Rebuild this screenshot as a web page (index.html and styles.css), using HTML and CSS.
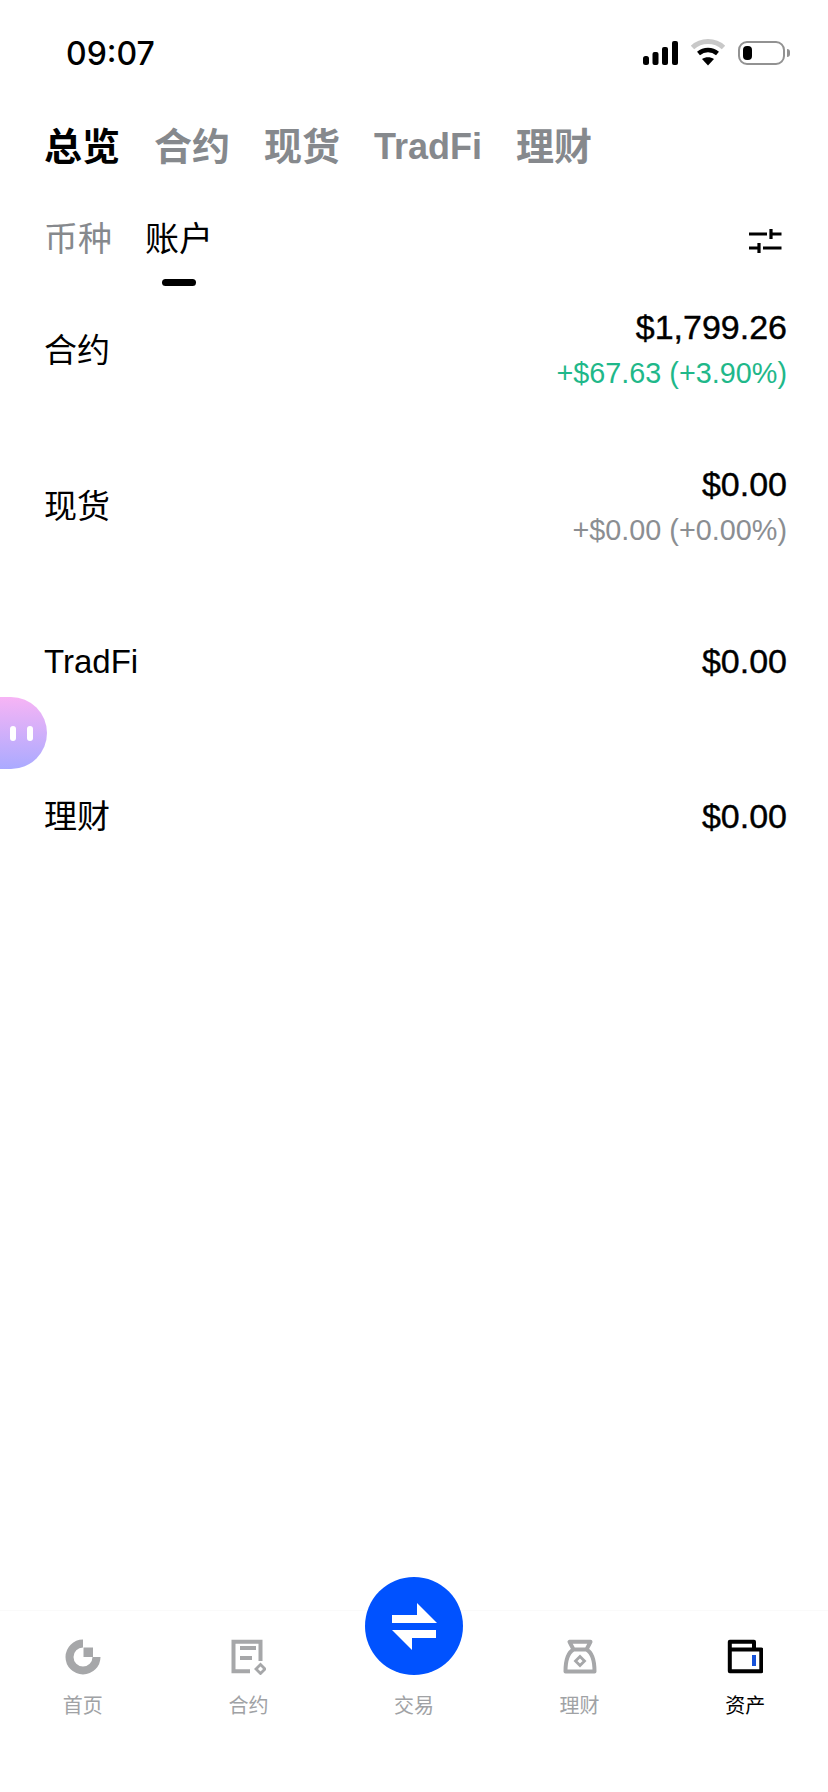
FILE: index.html
```html
<!DOCTYPE html>
<html>

<head>
  <link rel="stylesheet" href="styles.css">
</head>

<body>
  <div class="page">
    <!-- status bar -->
    <div class="status-bar">
      <div class="time">09:07</div>
      <div class="status-icons">
        <svg class="signal" width="35" height="24" viewBox="0 0 35 24">
          <rect x="0" y="15" width="6" height="9" rx="2.500" fill="#000" />
          <rect x="9.500" y="11" width="6" height="13" rx="2" fill="#000" />
          <rect x="19" y="6" width="6" height="18" rx="2" fill="#000" />
          <rect x="29" y="0" width="6" height="24" rx="2" fill="#000" />
        </svg>
        <svg class="wifi" width="36" height="27" viewBox="0 0 36 27">
          <path d="M2.500 8.500C11 0.500 25 0.500 33.500 8.500" fill="none" stroke="#c8c8c8" stroke-width="5" />
          <path d="M8.500 14.500C14 9.800 22 9.800 27.500 14.500" fill="none" stroke="#000" stroke-width="4.500" />
          <path d="M12 20C15.500 17.500 20.500 17.500 24 20L18 26.500Z" fill="#000" />
        </svg>
        <div class="battery">
          <div class="battery-body"><div class="battery-level"></div></div>
          <div class="battery-nub"></div>
        </div>
      </div>
    </div>

    <!-- top tabs -->
    <div class="main-tabs">
      <div class="main-tab active">总览</div>
      <div class="main-tab">合约</div>
      <div class="main-tab">现货</div>
      <div class="main-tab latin">TradFi</div>
      <div class="main-tab">理财</div>
    </div>

    <div class="sub-tabs">
      <div class="sub-tab">币种</div>
      <div class="sub-tab active">账户</div>
      <svg class="filter-icon" width="33" height="26" viewBox="0 0 33 26">
        <path d="M0 6H18M22 1V11M22 6H32.500M0 20H10M10 15V25M14 20H32.500" fill="none" stroke="#000" stroke-width="3.200" />
      </svg>
    </div>

    <!-- account rows -->
    <div class="account-list">
      <div class="account-row">
        <div class="account-name">合约</div>
        <div class="account-values">
          <div class="amount">$1,799.26</div>
          <div class="change up">+$67.63 (+3.90%)</div>
        </div>
      </div>
      <div class="account-row">
        <div class="account-name">现货</div>
        <div class="account-values">
          <div class="amount">$0.00</div>
          <div class="change">+$0.00 (+0.00%)</div>
        </div>
      </div>
      <div class="account-row">
        <div class="account-name">TradFi</div>
        <div class="account-values">
          <div class="amount">$0.00</div>
        </div>
      </div>
      <div class="account-row">
        <div class="account-name">理财</div>
        <div class="account-values">
          <div class="amount">$0.00</div>
        </div>
      </div>
    </div>

    <!-- floating assistant -->
    <div class="bubble">
      <span class="eye"></span>
      <span class="eye"></span>
    </div>

    <!-- bottom nav -->
    <div class="tab-bar">
      <div class="tab-item">
        <svg class="tab-icon" width="36" height="36" viewBox="0 0 36 36">
          <path d="M18 4.500A13.500 13.500 0 1 0 31.500 18" fill="none" stroke="#a6a7a9" stroke-width="8" />
          <rect x="18.500" y="8.500" width="9.500" height="9.500" fill="#a6a7a9" />
        </svg>
        <div class="tab-label">首页</div>
      </div>
      <div class="tab-item">
        <svg class="tab-icon" width="36" height="36" viewBox="0 0 36 36">
          <path d="M30.500 22V2.800H3.500V32.300H20M10 9H26M10 19H22" fill="none" stroke="#a6a7a9" stroke-width="4" />
          <path d="M30.500 25.500L35 30L30.500 34.500L26 30Z" fill="none" stroke="#a6a7a9" stroke-width="2.800" />
        </svg>
        <div class="tab-label">合约</div>
      </div>
      <div class="tab-item">
        <div class="trade-button">
          <svg width="98" height="98" viewBox="0 0 98 98">
            <path d="M27 38H52V26L72 46H27Z" fill="#fff" />
            <path d="M71 53H27L47 73V61H71Z" fill="#fff" />
          </svg>
        </div>
        <div class="tab-icon-space"></div>
        <div class="tab-label">交易</div>
      </div>
      <div class="tab-item">
        <svg class="tab-icon" width="36" height="36" viewBox="0 0 36 36">
          <path d="M7.500 2.800H28.500L24.500 10.500H11.500ZM11.500 10.500C6 13.500 3.500 20 3.500 32.500H32.500C32.500 20 30 13.500 24.500 10.500" fill="none" stroke="#a6a7a9" stroke-width="4" stroke-linejoin="round" />
          <path d="M18 17.500L22.500 22L18 26.500L13.500 22Z" fill="none" stroke="#a6a7a9" stroke-width="2.800" />
        </svg>
        <div class="tab-label">理财</div>
      </div>
      <div class="tab-item">
        <svg class="tab-icon" width="36" height="36" viewBox="0 0 36 36">
          <path d="M2.800 10.500V2.800H27V10.500M2.800 10.500H34.300V32.300H2.800Z" fill="none" stroke="#000" stroke-width="4" stroke-linejoin="round" />
          <rect x="25" y="16" width="4" height="11" fill="#1652d8" />
        </svg>
        <div class="tab-label active">资产</div>
      </div>
    </div>
  </div>
</body>

</html>
```

FILE: styles.css
```css
* {
  box-sizing: border-box;
}

body {
  margin: 0;
  background-color: #fff;
  font-family: "Liberation Sans", "Noto Sans CJK SC", sans-serif;
  color: #000;
}

.page {
  position: relative;
  display: flex;
  flex-direction: column;
  height: 1792px;
  overflow: hidden;
}

/* status bar */
.status-bar {
  display: flex;
  justify-content: space-between;
  align-items: center;
  height: 53px;
  margin-top: 26px;
  padding: 0 38px 0 66px;
}

.time {
  padding-top: 2px;
  font-family: "Inter", "Liberation Sans", sans-serif;
  font-size: 32px;
  font-weight: 500;
}

.status-icons {
  display: flex;
  align-items: center;
  gap: 12px;
}

.wifi {
  margin-top: -1px;
}

.battery {
  display: flex;
  align-items: center;
  gap: 2px;
}

.battery-body {
  width: 47px;
  height: 24px;
  padding: 3px;
  border: 2px solid #929292;
  border-radius: 9px;
}

.battery-level {
  width: 9px;
  height: 100%;
  background-color: #000;
  border-radius: 4px;
}

.battery-nub {
  width: 3px;
  height: 8px;
  background-color: #929292;
  border-radius: 0 3px 3px 0;
}

/* tabs */
.main-tabs {
  display: flex;
  align-items: center;
  gap: 34px;
  height: 48px;
  margin-top: 44px;
  padding-left: 44px;
}

.main-tab {
  font-size: 38px;
  font-weight: 700;
  line-height: 48px;
  color: #86898d;
}

.main-tab.latin {
  font-size: 36px;
}

.main-tab.active {
  color: #000;
}

.sub-tabs {
  position: relative;
  display: flex;
  align-items: center;
  gap: 33px;
  height: 44px;
  margin-top: 48px;
  padding-left: 44px;
}

.sub-tab {
  position: relative;
  margin-bottom: 5px;
  font-size: 34px;
  line-height: 44px;
  color: #86898d;
}

.sub-tab.active {
  color: #000;
}

.sub-tab.active::after {
  content: "";
  position: absolute;
  left: 17px;
  top: 62px;
  width: 34px;
  height: 7px;
  background-color: #000;
  border-radius: 4px;
}

.filter-icon {
  margin-left: auto;
  margin-right: 46px;
}

/* account rows */
.account-list {
  display: flex;
  flex-direction: column;
  margin-top: 7px;
  padding: 0 41px 0 44px;
}

.account-row {
  display: flex;
  justify-content: space-between;
  align-items: center;
  height: 155px;
}

.account-row:first-child {
  height: 158px;
}

.account-name {
  padding-top: 3px;
  font-size: 33px;
  line-height: 40px;
}

.account-values {
  text-align: right;
}

.amount {
  font-size: 34px;
  line-height: 40px;
  -webkit-text-stroke: 0.4px #000;
}

.change {
  margin-top: 8px;
  font-size: 28.8px;
  line-height: 36px;
  color: #8b8e92;
}

.change.up {
  color: #1fb88a;
}

/* floating bubble sits over the list */
.bubble {
  position: absolute;
  left: 0;
  top: 697px;
  display: flex;
  align-items: center;
  gap: 11px;
  width: 47px;
  height: 72px;
  padding-left: 10px;
  background: linear-gradient(180deg, #f7b4f5 0%, #aaaaff 100%);
  border-radius: 0 36px 36px 0;
}

.eye {
  width: 6px;
  height: 15px;
  background-color: #fff;
  border-radius: 3px;
}

/* bottom nav */
.tab-bar {
  position: relative;
  display: flex;
  margin-top: auto;
  height: 182px;
  padding-top: 28px;
  border-top: 1px solid #fafafa;
}

.tab-item {
  display: flex;
  flex-direction: column;
  align-items: center;
  flex: 1;
}

.tab-icon,
.tab-icon-space {
  height: 36px;
  width: 36px;
}

.tab-label {
  margin-top: 16px;
  font-size: 20px;
  line-height: 30px;
  color: #a0a2a5;
}

.tab-label.active {
  color: #000;
}

.trade-button {
  position: absolute;
  left: 365px;
  top: -34px;
  width: 98px;
  height: 98px;
  background-color: #0052ff;
  border-radius: 50%;
}
```
